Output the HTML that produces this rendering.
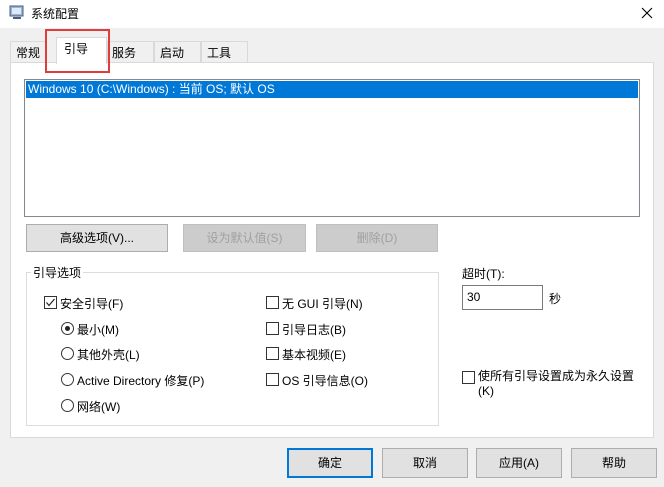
<!DOCTYPE html>
<html><head><meta charset="utf-8"><style>
*{box-sizing:border-box;margin:0;padding:0}
body{width:664px;height:487px;background:#f0f0f0;font-family:"Liberation Sans","Noto Sans CJK SC",sans-serif;font-size:12px;color:#000;position:relative;overflow:hidden}
.a{position:absolute;white-space:nowrap}
.btn{position:absolute;background:#e1e1e1;border:1px solid #adadad;text-align:center;line-height:26px}
.dis{color:#a0a0a0;background:#ccc;border-color:#bfbfbf}
.cb{position:absolute;width:13px;height:13px;border:1px solid #333;background:#fff}
.rb{position:absolute;width:13px;height:13px;border:1px solid #333;border-radius:50%;background:#fff}
</style></head><body>
<div class="a" style="left:0;top:0;width:664px;height:28px;background:#fff"></div>
<svg class="a" style="left:9px;top:5px" width="16" height="16"><rect x="1" y="1" width="13" height="10" fill="#9bb3d6" stroke="#4a5d80"/><rect x="3" y="3" width="9" height="6" fill="#dfe9f7"/><rect x="4" y="12" width="8" height="2" fill="#4a5d80"/></svg>
<div class="a" style="left:31px;top:5px;font-size:12px">系统配置</div>
<svg class="a" style="left:641px;top:7px" width="12" height="12"><path d="M1 1L11 11M11 1L1 11" stroke="#000" stroke-width="1.1"/></svg>
<!-- tabs -->
<div class="a" style="left:10px;top:41px;width:37px;height:21px;border:1px solid #d9d9d9;border-bottom:none;background:#f0f0f0"></div>
<div class="a" style="left:16px;top:44px">常规</div>
<div class="a" style="left:107px;top:41px;width:47px;height:21px;border:1px solid #d9d9d9;border-bottom:none"></div>
<div class="a" style="left:112px;top:44px">服务</div>
<div class="a" style="left:154px;top:41px;width:47px;height:21px;border:1px solid #d9d9d9;border-bottom:none"></div>
<div class="a" style="left:160px;top:44px">启动</div>
<div class="a" style="left:201px;top:41px;width:47px;height:21px;border:1px solid #d9d9d9;border-bottom:none"></div>
<div class="a" style="left:207px;top:44px">工具</div>
<div class="a" style="left:10px;top:62px;width:644px;height:376px;background:#fff;border:1px solid #d9d9d9"></div>
<div class="a" style="left:56px;top:37px;width:51px;height:27px;background:#fff;border:1px solid #d9d9d9;border-bottom:none"></div>
<div class="a" style="left:64px;top:40px">引导</div>
<div class="a" style="left:45px;top:29px;width:65px;height:44px;border:2px solid #e03c3c"></div>
<!-- list -->
<div class="a" style="left:24px;top:79px;width:616px;height:138px;border:1px solid #828790;background:#fff"></div>
<div class="a" style="left:26px;top:81px;width:612px;height:17px;background:#0078d7;color:#fff;padding-left:2px;line-height:17px">Windows 10 (C:\Windows) : 当前 OS; 默认 OS</div>
<div class="btn" style="left:26px;top:224px;width:142px;height:28px">高级选项(V)...</div>
<div class="btn dis" style="left:183px;top:224px;width:123px;height:28px">设为默认值(S)</div>
<div class="btn dis" style="left:316px;top:224px;width:122px;height:28px">删除(D)</div>
<!-- group -->
<div class="a" style="left:26px;top:272px;width:413px;height:154px;border:1px solid #dcdcdc"></div>
<div class="a" style="left:31px;top:264px;background:#fff;padding:0 2px">引导选项</div>
<div class="cb" style="left:44px;top:296px"></div>
<svg class="a" style="left:44px;top:296px" width="13" height="13"><path d="M2.5 6.5L5 9.5L10.5 3" stroke="#222" stroke-width="1.2" fill="none"/></svg>
<div class="a" style="left:60px;top:295px">安全引导(F)</div>
<div class="rb" style="left:61px;top:322px"></div><div class="a" style="left:65px;top:326px;width:5px;height:5px;border-radius:50%;background:#222"></div>
<div class="a" style="left:77px;top:321px">最小(M)</div>
<div class="rb" style="left:61px;top:347px"></div><div class="a" style="left:77px;top:346px">其他外壳(L)</div>
<div class="rb" style="left:61px;top:373px"></div><div class="a" style="left:77px;top:372px">Active Directory 修复(P)</div>
<div class="rb" style="left:61px;top:399px"></div><div class="a" style="left:77px;top:398px">网络(W)</div>
<div class="cb" style="left:266px;top:296px"></div><div class="a" style="left:282px;top:295px">无 GUI 引导(N)</div>
<div class="cb" style="left:266px;top:322px"></div><div class="a" style="left:282px;top:321px">引导日志(B)</div>
<div class="cb" style="left:266px;top:347px"></div><div class="a" style="left:282px;top:346px">基本视频(E)</div>
<div class="cb" style="left:266px;top:373px"></div><div class="a" style="left:282px;top:372px">OS 引导信息(O)</div>
<div class="a" style="left:462px;top:265px">超时(T):</div>
<div class="a" style="left:462px;top:285px;width:81px;height:25px;border:1px solid #7a7a7a;background:#fff;padding:4px 0 0 4px">30</div>
<div class="a" style="left:549px;top:290px">秒</div>
<div class="cb" style="left:462px;top:371px"></div>
<div class="a" style="left:478px;top:367px">使所有引导设置成为永久设置</div>
<div class="a" style="left:478px;top:384px">(K)</div>
<!-- bottom -->
<div class="btn" style="left:287px;top:448px;width:86px;height:30px;border:2px solid #0078d7;line-height:26px">确定</div>
<div class="btn" style="left:382px;top:448px;width:86px;height:30px;line-height:28px">取消</div>
<div class="btn" style="left:476px;top:448px;width:86px;height:30px;line-height:28px">应用(A)</div>
<div class="btn" style="left:571px;top:448px;width:86px;height:30px;line-height:28px">帮助</div>
</body></html>
